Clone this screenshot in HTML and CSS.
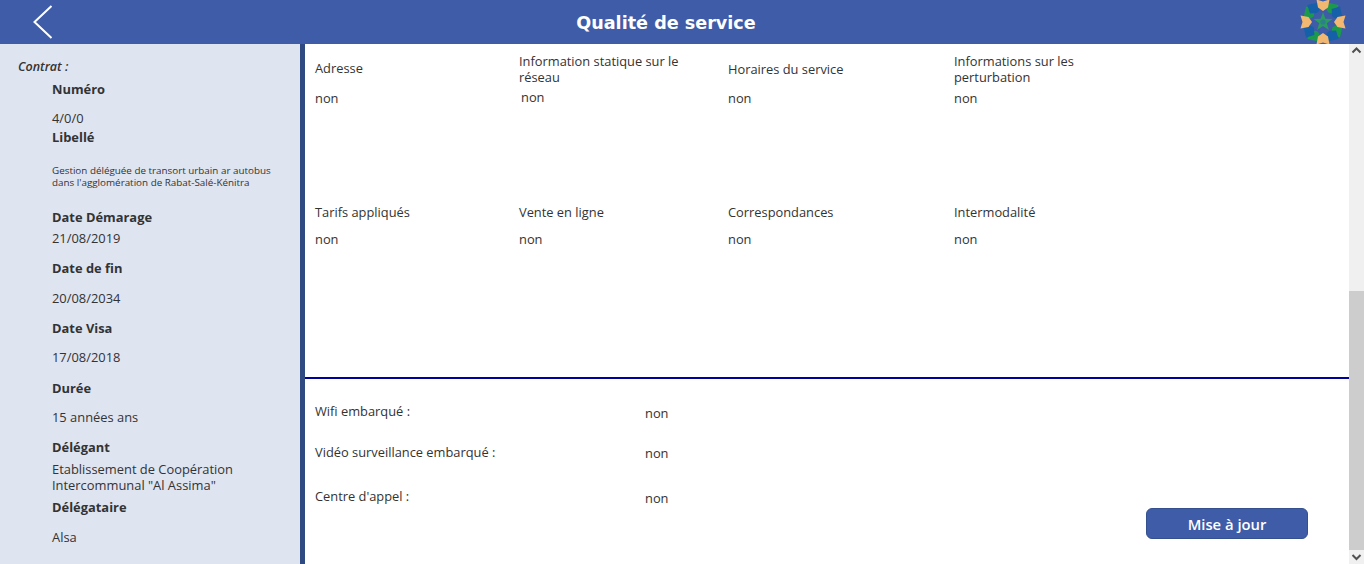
FILE: index.html
```html
<!DOCTYPE html>
<html lang="fr">
  <head>
    <meta charset="UTF-8" />
    <meta name="viewport" content="width=device-width, initial-scale=1.0" />
    <title>Qualité de service</title>
    <link rel="stylesheet" href="styles.css">
  </head>
  <body>
    <header class="topbar">
      <svg class="back-icon" width="20" height="34" viewBox="0 0 20 34">
        <path d="M18.5 1 L1.5 17 L18.5 33" fill="none" stroke="#fff" stroke-width="2" />
      </svg>
      <h1 class="page-title">Qualité de service</h1>
      <svg class="logo" width="46" height="44" viewBox="-23 -22 46 44">
        <defs>
          <path id="petal-tan" d="M-6.5 -22.5 L0 -20.5 L6.5 -22.5 L5 -14.5 L0 -11 L-5 -14.5 Z" fill="#f2b872" />
          <path id="petal-green" d="M-6 -19 L5 -22.5 L7 -14 L0 -10.5 L-5 -14 Z" fill="#1a9a4a" />
          <path id="petal-blue" d="M-5 -22.5 L6 -19 L5 -14 L0 -10.5 L-7 -14 Z" fill="#1560a8" />
        </defs>
        <use href="#petal-green" transform="rotate(30)" />
        <use href="#petal-blue" transform="rotate(60)" />
        <use href="#petal-green" transform="rotate(120)" />
        <use href="#petal-blue" transform="rotate(150)" />
        <use href="#petal-green" transform="rotate(210)" />
        <use href="#petal-blue" transform="rotate(240)" />
        <use href="#petal-green" transform="rotate(300)" />
        <use href="#petal-blue" transform="rotate(330)" />
        <use href="#petal-tan" />
        <use href="#petal-tan" transform="rotate(90)" />
        <use href="#petal-tan" transform="rotate(180)" />
        <use href="#petal-tan" transform="rotate(270)" />
        <circle cx="0" cy="0" r="11" fill="#3e5ca8" />
        <path d="M0 -10 L2.4 -3.2 L9.5 -3 L3.8 1.3 L5.9 8 L0 4 L-5.9 8 L-3.8 1.3 L-9.5 -3 L-2.4 -3.2 Z" fill="#2a9c5e" />
        <circle cx="0" cy="0" r="2.6" fill="#2c7f8c" />
      </svg>
    </header>

    <div class="page">
      <aside class="sidebar">
        <p class="contract-title">Contrat :</p>
        <p class="label mt-4">Numéro</p>
        <p class="value mt-11">4/0/0</p>
        <p class="label mt-1">Libellé</p>
        <p class="value value-small mt-19">Gestion déléguée de transort urbain ar autobus dans l'agglomération de Rabat-Salé-Kénitra</p>
        <p class="label mt-19">Date Démarage</p>
        <p class="value mt-3">21/08/2019</p>
        <p class="label mt-12">Date de fin</p>
        <p class="value mt-12">20/08/2034</p>
        <p class="label mt-12">Date Visa</p>
        <p class="value mt-11">17/08/2018</p>
        <p class="label mt-13">Durée</p>
        <p class="value mt-11">15 années ans</p>
        <p class="label mt-12">Délégant</p>
        <p class="value value-wrap mt-5">Etablissement de Coopération Intercommunal "Al Assima"</p>
        <p class="label mt-5">Délégataire</p>
        <p class="value mt-12">Alsa</p>
      </aside>

      <main class="content">
        <section class="info-grid">
          <div class="info-label info-label-high">Adresse</div>
          <div class="info-label">Information statique sur le réseau</div>
          <div class="info-label">Horaires du service</div>
          <div class="info-label">Informations sur les perturbation</div>
          <div>non</div>
          <div class="info-value-shift">non</div>
          <div>non</div>
          <div>non</div>
          <div class="info-label info-label-up">Tarifs appliqués</div>
          <div class="info-label info-label-up">Vente en ligne</div>
          <div class="info-label info-label-up">Correspondances</div>
          <div class="info-label info-label-up">Intermodalité</div>
          <div>non</div>
          <div>non</div>
          <div>non</div>
          <div>non</div>
        </section>

        <section class="equipment">
          <div class="equipment-grid">
            <div>Wifi embarqué :</div>
            <div class="equipment-value">non</div>
            <div>Vidéo surveillance embarqué :</div>
            <div class="equipment-value equipment-value-tight">non</div>
            <div>Centre d'appel :</div>
            <div class="equipment-value">non</div>
          </div>
          <button class="update-btn">Mise à jour</button>
        </section>
      </main>

      <div class="scrollbar">
        <svg width="15" height="14" viewBox="0 0 15 14">
          <path d="M3.5 8.5 L7.5 4.5 L11.5 8.5" fill="none" stroke="#505050" stroke-width="2" />
        </svg>
        <div class="scroll-space"></div>
        <div class="scroll-thumb"></div>
        <svg width="15" height="14" viewBox="0 0 15 14">
          <path d="M3.5 5 L7.5 9 L11.5 5" fill="none" stroke="#505050" stroke-width="2" />
        </svg>
      </div>
    </div>
  </body>
</html>
```

FILE: styles.css
```css
/* General Styles */
html,
body {
  height: 100%;
}
body {
  display: flex;
  flex-direction: column;
  margin: 0;
  overflow: hidden;
  font-family: "Open Sans", Arial, sans-serif;
  color: #333;
  background: #fff;
}
p {
  margin: 0;
}

/* Top bar */
.topbar {
  display: flex;
  align-items: center;
  flex: 0 0 44px;
  height: 44px;
  overflow: hidden;
  background: #3e5ca8;
}
.back-icon {
  margin-left: 33px;
  flex: none;
}
.page-title {
  flex: 1;
  margin: 0;
  padding: 1px 21px 0 0;
  text-align: center;
  font-family: "DejaVu Sans", Verdana, sans-serif;
  font-size: 17.6px;
  font-weight: bold;
  color: #fff;
}
.logo {
  flex: none;
  margin-right: 18px;
}

/* Page columns */
.page {
  display: flex;
  flex: 1;
  min-height: 0;
}

/* Sidebar */
.sidebar {
  flex: 0 0 300px;
  padding-top: 13px;
  background: #dfe4f1;
  border-right: 5px solid #2f4a80;
  font-size: 12.9px;
  line-height: 18px;
}
.contract-title {
  margin: 1px 0 0 18px;
  font-size: 12.5px;
  font-style: italic;
  font-weight: 600;
}
.label,
.value {
  margin-left: 52px;
}
.label {
  font-weight: 700;
}
.value-small {
  width: 235px;
  height: 24px;
  font-size: 9.85px;
  line-height: 11.6px;
}
.value-wrap {
  width: 215px;
  line-height: 16px;
}
.mt-1 { margin-top: 1px; }
.mt-3 { margin-top: 3px; }
.mt-4 { margin-top: 4px; }
.mt-5 { margin-top: 5px; }
.mt-11 { margin-top: 11px; }
.mt-12 { margin-top: 12px; }
.mt-13 { margin-top: 13px; }
.mt-19 { margin-top: 19px; }

/* Main content */
.content {
  flex: 1;
  min-width: 0;
  font-size: 12.85px;
  line-height: 16px;
}
.info-grid {
  display: grid;
  grid-template-columns: 204px 209px 226px 160px;
  grid-template-rows: 37px 106px 35px 16px;
  box-sizing: border-box;
  height: 333px;
  padding: 9px 0 0 10px;
}
.info-label {
  display: flex;
  align-items: center;
  box-sizing: border-box;
  max-width: 180px;
  height: 32px;
}
.info-label-up {
  padding-bottom: 1px;
}
.info-label-high {
  padding-bottom: 2px;
}
.info-value-shift {
  margin: -1px 0 0 2px;
}
.equipment {
  display: flex;
  justify-content: space-between;
  align-items: flex-end;
  height: 187px;
  box-sizing: border-box;
  padding: 24px 41px 25px 10px;
  border-top: 2px solid #00009a;
}
.equipment-grid {
  display: grid;
  grid-template-columns: 330px auto;
  grid-template-rows: 41px 44px 20px;
  align-self: flex-start;
}
.equipment-value {
  margin-top: 2px;
}
.equipment-value-tight {
  margin-top: 1px;
}
.update-btn {
  width: 162px;
  height: 31px;
  padding: 0;
  background: #3e5ca8;
  color: #fff;
  border: 1px solid #34508f;
  border-radius: 6px;
  font-family: inherit;
  font-size: 14.8px;
  font-weight: 600;
}

/* Scrollbar */
.scrollbar {
  display: flex;
  flex-direction: column;
  flex: 0 0 15px;
  background: #f0f0f0;
}
.scrollbar svg {
  flex: none;
}
.scroll-space {
  flex: 1;
}
.scroll-thumb {
  flex: 0 0 259px;
  background: #cdcdcd;
}
```
